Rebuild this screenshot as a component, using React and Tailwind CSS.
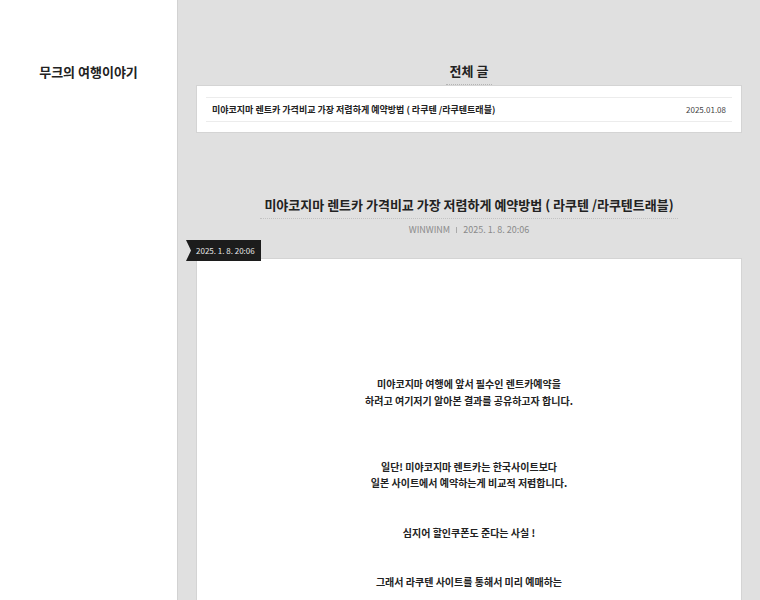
import React from 'react'

const font = { fontFamily: '"Noto Sans CJK KR", "Noto Sans", sans-serif' }

const body = [
  '미야코지마 여행에 앞서 필수인 렌트카예약을',
  '하려고 여기저기 알아본 결과를 공유하고자 합니다.',
  '',
  '',
  '',
  '일단! 미야코지마 렌트카는 한국사이트보다',
  '일본 사이트에서 예약하는게 비교적 저렴합니다.',
  '',
  '',
  '심지어 할인쿠폰도 준다는 사실 !',
  '',
  '',
  '그래서 라쿠텐 사이트를 통해서 미리 예매하는',
]

export default function App() {
  return (
    <div className="flex h-[600px] w-[760px] overflow-hidden" style={font}>
      {/* 사이드바 */}
      <aside className="w-[178px] shrink-0 bg-white border-r border-[#d2d2d2] pt-[62px]">
        <h1 className="text-center text-[13px] font-bold leading-5 text-[#222]">무크의 여행이야기</h1>
      </aside>

      {/* 본문 */}
      <main className="flex-1 bg-[#e0e0e0] px-[18px] pt-[61px]">
        <div className="flex justify-center">
          <h2 className="border-b border-dotted border-[#b5b5b5] px-1 pb-[3px] text-[13px] font-bold leading-5 text-[#222]">전체 글</h2>
        </div>

        <div className="border border-[#d4d4d4] bg-white px-[9px] pt-[11px] pb-[10px]">
          <div className="flex h-[25px] items-center justify-between border-y border-[#ececec] px-[6px]">
            <span className="text-[9px] font-semibold text-[#222]">미야코지마 렌트카 가격비교 가장 저렴하게 예약방법 ( 라쿠텐 /라쿠텐트래블)</span>
            <span className="text-[8px] text-[#444]">2025.01.08</span>
          </div>
        </div>

        <div className="mt-[62px] flex justify-center">
          <h3 className="border-b border-dotted border-[#c2c2c2] px-1 pb-[3px] text-[13px] font-semibold leading-5 text-[#222]">
            미야코지마 렌트카 가격비교 가장 저렴하게 예약방법 ( 라쿠텐 /라쿠텐트래블)
          </h3>
        </div>
        <div className="mt-[3px] flex items-center justify-center gap-[6px] text-[9px] leading-4 text-[#8a8a8a]">
          <span>WINWINM</span>
          <span className="h-[6px] w-px bg-[#aaa]" />
          <span>2025. 1. 8. 20:06</span>
        </div>

        <div className="relative mt-[20px] h-[400px] border border-[#d4d4d4] bg-white">
          <div className="absolute left-[-11px] top-[-19px] flex h-[21px] w-[75px] items-center bg-[#1c1c1c] pl-[10px] text-[8px] text-[#e6e6e6]"
            style={{ clipPath: 'polygon(0 0, 100% 0, 100% 100%, 0 100%, 5px 50%)' }}>
            2025. 1. 8. 20:06
          </div>
          <div className="pt-[117px] text-center text-[10px] font-semibold leading-[16.5px] text-[#222]">
            {body.map((line, i) => (
              <p key={i}>{line || '\u00a0'}</p>
            ))}
          </div>
        </div>
      </main>
    </div>
  )
}
